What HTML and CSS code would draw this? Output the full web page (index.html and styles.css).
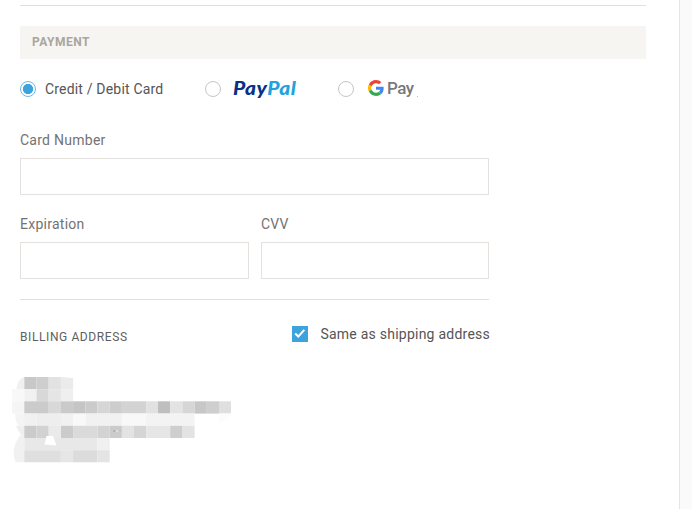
FILE: index.html
```html
<!DOCTYPE html>
<html lang="en">
<head>
<meta charset="utf-8">
<title>Payment</title>
<link rel="stylesheet" href="styles.css">
</head>
<body>
<main class="page">
  <hr class="rule">
  <h2 class="heading">PAYMENT</h2>
  <div class="methods">
    <label class="method card"><span class="radio on"></span><span class="method-name">Credit / Debit Card</span></label>
    <label class="method paypal"><span class="radio"></span><span class="pp"><span class="pp-dark">Pay</span><span class="pp-light">Pal</span></span></label>
    <label class="method gpay"><span class="radio"></span>
      <svg class="g" viewBox="0 0 48 48"><path fill="#ea4335" d="M24 9.500c3.500 0 6.700 1.200 9.200 3.600l6.900-6.900C35.900 2.400 30.500 0 24 0 14.600 0 6.500 5.400 2.600 13.200l8 6.200C12.400 13.700 17.700 9.500 24 9.500z"/><path fill="#4285f4" d="M47 24.600c0-1.600-.2-3.100-.4-4.600H24v9h12.900c-.6 3-2.200 5.500-4.700 7.200l7.700 6C44.400 38 47 31.800 47 24.600z"/><path fill="#fbbc05" d="M10.500 28.600a14 14 0 0 1 0-9.200l-8-6.200a24 24 0 0 0 0 21.600z"/><path fill="#34a853" d="M24 48c6.500 0 11.900-2.100 15.900-5.800l-7.700-6c-2.200 1.500-4.900 2.300-8.200 2.300-6.300 0-11.600-4.200-13.500-9.900l-8 6.200C6.500 42.600 14.600 48 24 48z"/></svg>
      <span class="gp">Pay</span><span class="dot"></span></label>
  </div>
  <form class="form">
    <label class="field"><span>Card Number</span><input type="text"></label>
    <div class="pair">
      <label class="field"><span>Expiration</span><input type="text"></label>
      <label class="field"><span>CVV</span><input type="text"></label>
    </div>
    <hr class="rule">
    <div class="billing">
      <h3 class="billing-title">BILLING ADDRESS</h3>
      <label class="same"><span class="check"><svg viewBox="0 0 16 16"><path d="M3.200 7.600 6.300 10.500 12.300 3.800"/></svg></span><span class="same-text">Same as shipping address</span></label>
    </div>
    <svg class="redacted" viewBox="12 377 220 86">
      <path fill="#f0f0f0" d="M24.300 377q-6 1-8 12h8z"/>
      <path fill="#f8f8f8" d="M12 389h12.300v12.300H12z"/>
      <path fill="#f5f5f5" d="M12 401.300h12.300v12.300H12z"/>
      <path fill="#f4f4f4" d="M15.500 413.600h9v12.200h-6q-4-6-3-12.200z"/>
      <path fill="#efefef" d="M16 425.800h8.500v12.200h-6l3-3q-4-4-5.500-9.200z"/>
      <path fill="#f1f1f1" d="M24.300 432v30.300h-8.500q-6-12 4-26z"/>
      <g>
        <path fill="#c8c8c8" d="M24.300 377h12.200v12.200H24.300z"/>
        <path fill="#cecece" d="M36.500 377h12.200v12.200H36.500z"/>
        <path fill="#e2e2e2" d="M48.700 377h12.200v12.200H48.700z"/>
        <path fill="#ebebeb" d="M60.900 377l12.200 1v11.200H60.900z"/>
        <path fill="#f1f1f1" d="M24.300 389.200h12.200v12.200H24.300z"/>
        <path fill="#d8d8d8" d="M36.500 389.200h12.200v12.200H36.500z"/>
        <path fill="#e5e5e5" d="M48.700 389.200h12.200v12.200H48.700z"/>
        <path fill="#efefef" d="M60.900 389.200h12.200v12.200H60.900z"/>
      </g>
      <g>
        <path fill="#cbcbcb" d="M24.300 401.300h24.400v12.300H24.300z"/>
        <path fill="#d8d8d8" d="M48.700 401.300h12.200v12.300H48.700z"/>
        <path fill="#cacaca" d="M60.900 401.300h12.200v12.300H60.900z"/>
        <path fill="#c5c5c5" d="M73.100 401.300h12.200v12.300H73.100z"/>
        <path fill="#cbcbcb" d="M85.300 401.300h12.200v12.300H85.300z"/>
        <path fill="#d6d6d6" d="M97.500 401.300h12.200v12.300H97.500z"/>
        <path fill="#cdcdcd" d="M109.700 401.300h12.200v12.300h-12.200z"/>
        <path fill="#d3d3d3" d="M121.900 401.300h24.200v12.300h-24.200z"/>
        <path fill="#e1e1e1" d="M146.100 401.300H158v12.300h-11.900z"/>
        <path fill="#bfbfbf" d="M158 401.300h12.200v12.300H158z"/>
        <path fill="#e3e3e3" d="M170.200 401.300h12.200v12.300h-12.200z"/>
        <path fill="#d6d6d6" d="M182.400 401.300h12.200v12.300h-12.200z"/>
        <path fill="#c7c7c7" d="M194.600 401.300h12.200v12.300h-12.200z"/>
        <path fill="#cecece" d="M206.800 401.300H219v12.300h-12.200z"/>
        <path fill="#dfdfdf" d="M219 401.300h12v12.300h-12z"/>
      </g>
      <g>
        <path fill="#f1f1f1" d="M24.300 413.600h12.200v12.200H24.300zM60.900 413.600h12.200v12.200H60.900zM85.300 413.600h36.600v12.200H85.300z"/>
        <path fill="#eeeeee" d="M36.500 413.600h24.400v12.200H36.500z"/>
        <path fill="#f8f8f8" d="M73.100 413.600h12.200v12.200H73.100zM121.900 413.600h24.200v12.200h-24.200z"/>
        <path fill="#f3f3f3" d="M146.100 413.600h48.500v12.200h-48.500z"/>
        <path fill="#fcfcfc" d="M219 413.600h12q-5 8-12 10z"/>
      </g>
      <g>
        <path fill="#cbcbcb" d="M24.300 425.800h12.200V438H24.300zM60.900 425.800h12.200V438H60.900z"/>
        <path fill="#d2d2d2" d="M36.500 425.800h12.200V438H36.500z"/>
        <path fill="#eaeaea" d="M48.700 425.800h12.200V438H48.700z"/>
        <path fill="#dadada" d="M73.100 425.800h24.400V438H73.100z"/>
        <path fill="#d3d3d3" d="M97.500 425.800h12.200V438H97.500z"/>
        <path fill="#cbcbcb" d="M109.700 425.800h12.200V438h-12.200z"/>
        <path fill="#e3e3e3" d="M121.900 425.800h12.100V438h-12.100zM182.400 425.800h12.200V438h-12.200z"/>
        <path fill="#d5d5d5" d="M134 425.800h12.100V438H134z"/>
        <path fill="#e6e6e6" d="M146.100 425.800h24.100V438h-24.100z"/>
        <path fill="#cecece" d="M170.200 425.800h12.200V438h-12.200z"/>
      </g>
      <g>
        <path fill="#e8e8e8" d="M24.300 438h73.200v12.200H24.300z"/>
        <path fill="#f0f0f0" d="M97.500 438h12.200v12.200H97.500z"/>
        <path fill="#dfdfdf" d="M24.300 450.200h36.600v12.100H24.300z"/>
        <path fill="#e6e6e6" d="M60.900 450.200h12.200v12.100H60.900z"/>
        <path fill="#dcdcdc" d="M73.100 450.200h24.400v12.100H73.100z"/>
        <path fill="#e4e4e4" d="M97.500 450.200h12.200v12.100H97.500z"/>
        <path fill="#fff" d="M46.500 436h6.500l3.500 9.500-12-1z"/>
        <path fill="#aaa" d="M113.500 430h1.500v2h-1.500zM119.500 430h1v1h-1z"/>
        <path fill="#dcdcdc" d="M116 430h2.500v2H116z"/>
      </g>
    </svg>
  </form>
</main>
</body>
</html>
```
FILE: styles.css
```css
* { box-sizing: border-box; }
body {
  margin: 0;
  height: 509px;
  overflow: hidden;
  background: #fafafa;
  font-family: Roboto, "Liberation Sans", sans-serif;
  font-size: 14px;
  color: #555;
}
.page {
  width: 680px;
  height: 509px;
  padding: 5px 33px 0 20px;
  background: #fff;
  border-right: 1px solid #e4e4e4;
}
.rule { height: 1px; margin: 0; border: 0; background: #e0e0e0; }
.heading {
  height: 33px;
  margin: 20px 0 0;
  padding-left: 12px;
  background: #f6f5f1;
  color: #a9a59f;
  font-size: 12px;
  font-weight: 700;
  line-height: 33px;
  letter-spacing: 0.5px;
}
.methods { display: flex; height: 60px; align-items: center; }
.method { display: flex; align-items: center; }
.card { width: 185px; }
.paypal { width: 133px; }
.radio {
  flex: none;
  width: 16px;
  height: 16px;
  border: 1px solid #c6c6c6;
  border-radius: 50%;
}
.radio.on {
  border-color: #6bb9e5;
  background: radial-gradient(circle, #3da3dc 0 4.800px, #fff 5.400px);
}
.method-name { margin-left: 9px; letter-spacing: 0.18px; }
.pp {
  margin: -3px 0 0 12px;
  font-family: Lato, sans-serif;
  font-size: 18.500px;
  font-style: italic;
  font-weight: 900;
  line-height: 20px;
  letter-spacing: 0.4px;
  transform: scaleX(1.13);
  transform-origin: left;
}
.pp-dark { color: #073187; }
.pp-light { color: #1da4df; }
.g { width: 16px; height: 16px; margin: -2px 0 0 14px; }
.gp {
  margin: -2px 0 0 3px;
  color: #777a7d;
  font-size: 17px;
  font-weight: 500;
  line-height: 20px;
  letter-spacing: -0.5px;
}
.dot { width: 1px; height: 1px; margin: 15px 0 0 3px; background: #bbb; }
.form { width: 469px; }
.field { display: block; color: #737373; letter-spacing: 0.26px; }
.field span { display: block; height: 39px; line-height: 42px; }
.field input {
  display: block;
  width: 100%;
  height: 37px;
  border: 1px solid #e5e1df;
  background: #fff;
}
.pair { display: grid; grid-template-columns: 229px 228px; gap: 12px; margin: 8px 0 20px; }
.billing { display: flex; justify-content: space-between; height: 77px; }
.billing-title {
  margin: 27px 0 0;
  color: #606060;
  font-size: 12px;
  font-weight: 400;
  line-height: 20px;
  letter-spacing: 0.6px;
}
.same { display: flex; height: 20px; margin: 24px -1px 0 0; align-items: center; }
.check { width: 16px; height: 16px; margin-right: 12px; background: #3da3dc; }
.check svg { display: block; fill: none; stroke: #fff; stroke-width: 2; }
.same-text { letter-spacing: 0.24px; }
.redacted { display: block; width: 220px; height: 86px; margin-left: -8px; }
```
